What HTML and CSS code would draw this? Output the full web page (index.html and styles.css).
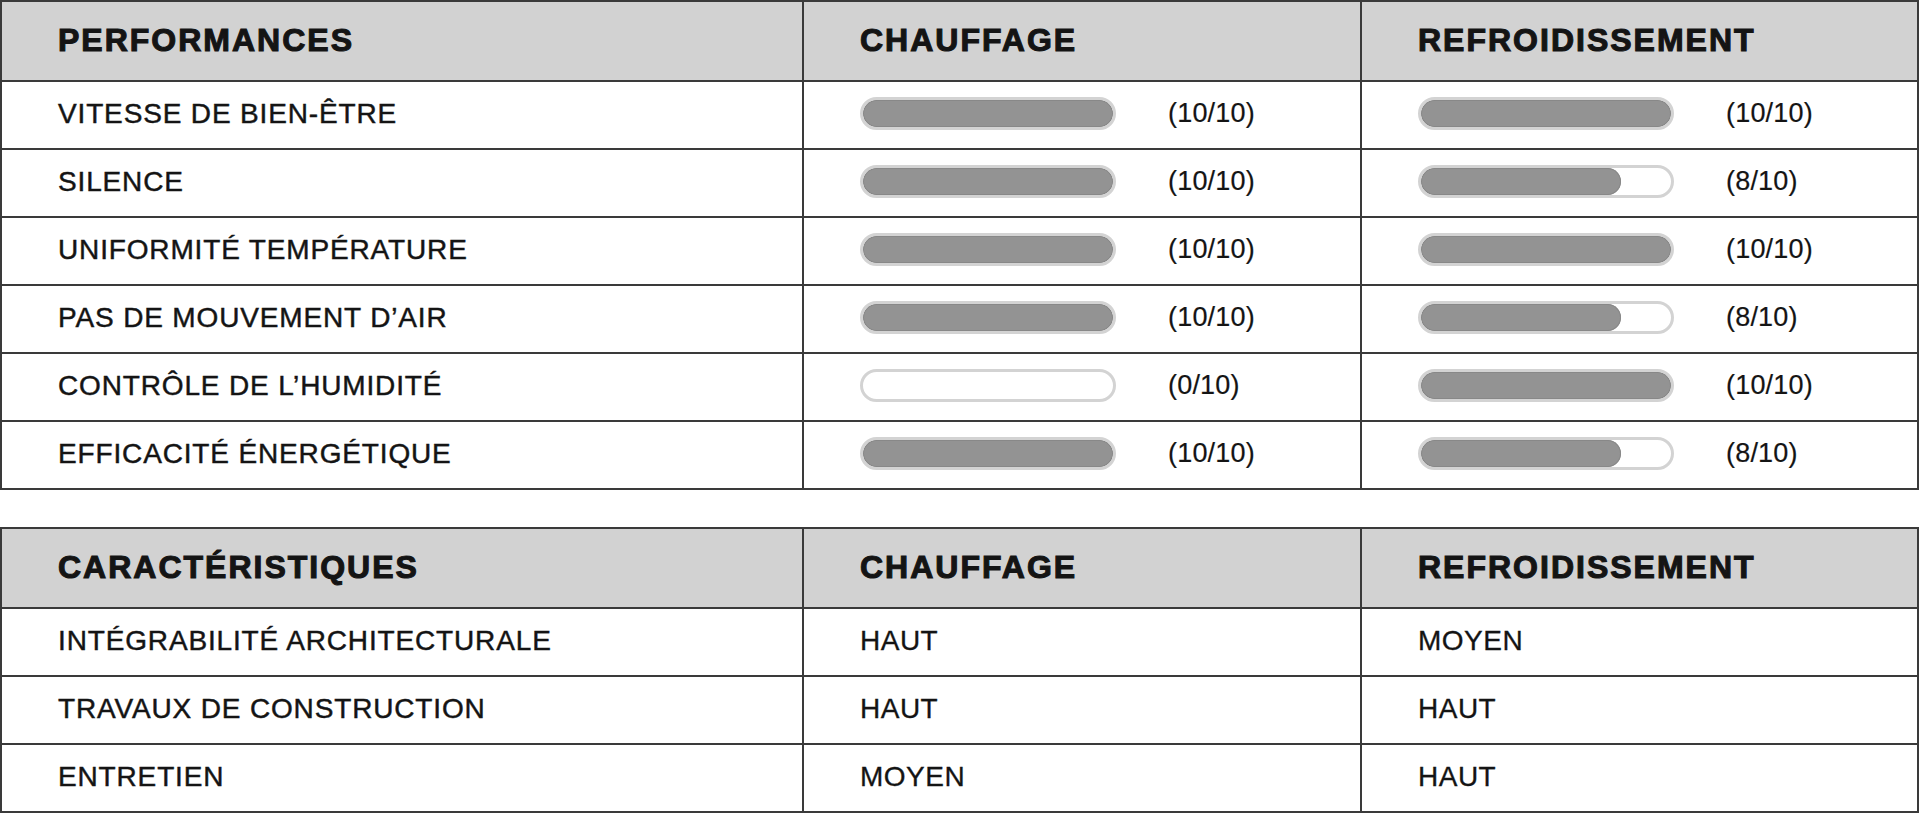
FILE: index.html
```html
<!DOCTYPE html>
<html lang="fr">
<head>
<meta charset="utf-8">
<title>Performances</title>
<link rel="stylesheet" href="styles.css">
</head>
<body>
<main class="page">
  <section class="grid">
    <div class="cell head">PERFORMANCES</div>
    <div class="cell head">CHAUFFAGE</div>
    <div class="cell head">REFROIDISSEMENT</div>

    <div class="cell label">VITESSE DE BIEN-ÊTRE</div>
    <div class="cell score"><span class="bar"><span class="fill" style="width:100%"></span></span><span class="val">(10/10)</span></div>
    <div class="cell score"><span class="bar"><span class="fill" style="width:100%"></span></span><span class="val">(10/10)</span></div>

    <div class="cell label">SILENCE</div>
    <div class="cell score"><span class="bar"><span class="fill" style="width:100%"></span></span><span class="val">(10/10)</span></div>
    <div class="cell score"><span class="bar"><span class="fill" style="width:80%"></span></span><span class="val">(8/10)</span></div>

    <div class="cell label">UNIFORMITÉ TEMPÉRATURE</div>
    <div class="cell score"><span class="bar"><span class="fill" style="width:100%"></span></span><span class="val">(10/10)</span></div>
    <div class="cell score"><span class="bar"><span class="fill" style="width:100%"></span></span><span class="val">(10/10)</span></div>

    <div class="cell label">PAS DE MOUVEMENT D’AIR</div>
    <div class="cell score"><span class="bar"><span class="fill" style="width:100%"></span></span><span class="val">(10/10)</span></div>
    <div class="cell score"><span class="bar"><span class="fill" style="width:80%"></span></span><span class="val">(8/10)</span></div>

    <div class="cell label">CONTRÔLE DE L’HUMIDITÉ</div>
    <div class="cell score"><span class="bar"><span class="fill" style="width:0%"></span></span><span class="val">(0/10)</span></div>
    <div class="cell score"><span class="bar"><span class="fill" style="width:100%"></span></span><span class="val">(10/10)</span></div>

    <div class="cell label">EFFICACITÉ ÉNERGÉTIQUE</div>
    <div class="cell score"><span class="bar"><span class="fill" style="width:100%"></span></span><span class="val">(10/10)</span></div>
    <div class="cell score"><span class="bar"><span class="fill" style="width:80%"></span></span><span class="val">(8/10)</span></div>
  </section>

  <section class="grid">
    <div class="cell head">CARACTÉRISTIQUES</div>
    <div class="cell head">CHAUFFAGE</div>
    <div class="cell head">REFROIDISSEMENT</div>

    <div class="cell label">INTÉGRABILITÉ ARCHITECTURALE</div>
    <div class="cell text">HAUT</div>
    <div class="cell text">MOYEN</div>

    <div class="cell label">TRAVAUX DE CONSTRUCTION</div>
    <div class="cell text">HAUT</div>
    <div class="cell text">HAUT</div>

    <div class="cell label">ENTRETIEN</div>
    <div class="cell text">MOYEN</div>
    <div class="cell text">HAUT</div>
  </section>
</main>
</body>
</html>
```

FILE: styles.css
```css
html, body {
  margin: 0;
  padding: 0;
  background: #ffffff;
}

body {
  font-family: "Liberation Sans", Arial, sans-serif;
  color: #141414;
}

.page {
  display: flex;
  flex-direction: column;
  gap: 37px;
  width: 1919px;
}

.grid {
  display: grid;
  grid-template-columns: 802px 558px 1fr;
  grid-template-rows: 80px;
  grid-auto-rows: 68px;
  border-top: 2px solid #3a3a3a;
  border-left: 2px solid #3a3a3a;
}

.cell {
  box-sizing: border-box;
  border-right: 2px solid #3a3a3a;
  border-bottom: 2px solid #3a3a3a;
  display: flex;
  align-items: center;
  padding-left: 56px;
  padding-bottom: 2px;
}

.head {
  background: #d2d2d2;
  font-weight: 700;
  font-size: 32px;
  letter-spacing: 2px;
  -webkit-text-stroke: 1.1px #141414;
  color: #141414;
  padding-bottom: 1px;
}

.label {
  font-size: 28px;
  letter-spacing: 0.85px;
  -webkit-text-stroke: 0.45px #141414;
}

.text {
  font-size: 28px;
  letter-spacing: 0.5px;
  -webkit-text-stroke: 0.3px #141414;
}

.score {
  gap: 52px;
  padding-bottom: 4px;
}

.bar {
  box-sizing: border-box;
  display: block;
  width: 256px;
  height: 33px;
  border: 3px solid #d3d3d3;
  border-radius: 17px;
  background: #ffffff;
  overflow: hidden;
}

.fill {
  display: block;
  height: 100%;
  border-radius: 14px;
  background: #939393;
  box-shadow: inset 0 0 0 1px #888888;
}

.val {
  font-size: 27px;
  letter-spacing: 0.2px;
  -webkit-text-stroke: 0.2px #141414;
}
```
